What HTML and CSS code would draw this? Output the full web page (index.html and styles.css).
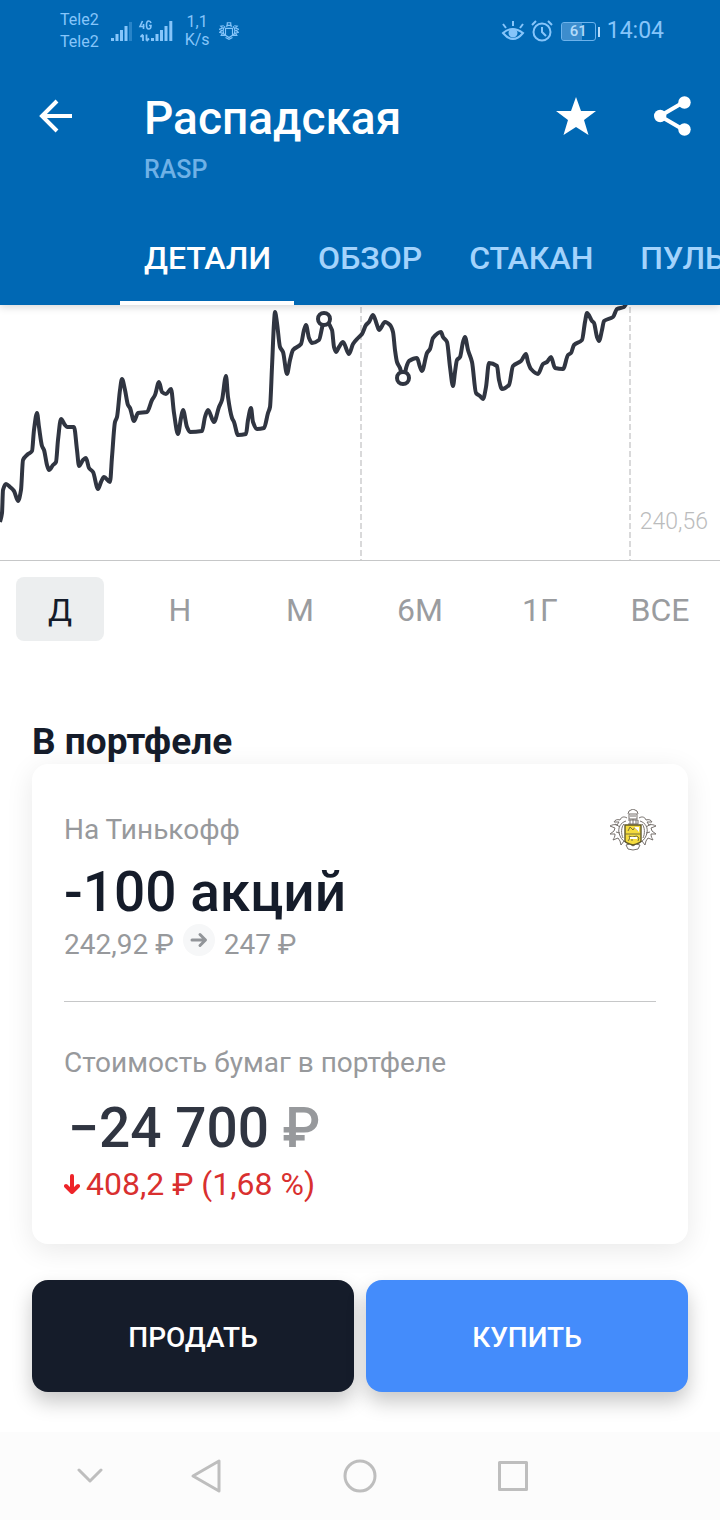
FILE: index.html
```html
<!DOCTYPE html>
<html lang="ru">
<head>
<meta charset="utf-8">
<meta name="viewport" content="width=device-width, initial-scale=1">
<title>Распадская</title>
<link rel="stylesheet" href="styles.css">
</head>
<body>
<div class="screen">
  <header class="header">
    <div class="status">
      <div class="carriers"><span>Tele2</span><span>Tele2</span></div>
      <svg class="signal" width="62" height="24" viewBox="111 18 62 24" aria-hidden="true">
        <path d="M112.500 37v3M117 33v7M121.500 29v11M126 25v15" stroke-width="3" stroke="currentColor"/>
        <path d="M130.500 21v19" stroke-width="3" stroke="currentColor" opacity=".3"/>
        <path d="M142.500 20l-2.500 5.500h4.500M143.500 23v5M151 22q-.5-2-2.300-2-2.200 0-2.200 4t2.200 4q2.300 0 2.300-3.500h-2" fill="none" stroke="currentColor" stroke-width="1.600"/>
        <path d="M143 40v-6M140.500 36l2.500-2.500M146.500 33.500v6M149 37.500l-2.500 2.500" fill="none" stroke="currentColor" stroke-width="1.800"/>
        <path d="M152.500 37v3M157 33v7M161.500 29v11M166 25v15M170.800 20v20" stroke-width="3" stroke="currentColor"/>
      </svg>
      <div class="speed"><span>1,1</span><span>K/s</span></div>
      <svg width="20" height="20" viewBox="0 0 46 42" aria-hidden="true" fill="none" stroke="currentColor" stroke-width="2.600">
        <path d="M15 15h16v16l-8 5-8-5zM18 12V8h10v4M19 7V2h8v5M14 10C8 15 8 25 14 32M32 10c6 5 6 15 0 22M11 9l-7 1 4 4-7 3 6 3-6 4 7 2-3 5 7 0M35 9l7 1-4 4 7 3-6 3 6 4-7 2 3 5-7 0M15 36l8 4 8-4"/>
      </svg>
      <div class="status-right">
        <svg width="24" height="22" viewBox="0 0 24 22" fill="none" stroke="currentColor" stroke-width="2" aria-hidden="true">
          <path d="M2 13q9-8 20 0-10 12-20 0zM12 6V1M5 8L2 4M19 8l3-4"/><circle cx="12" cy="13" r="3.500" fill="currentColor"/>
        </svg>
        <svg width="22" height="22" viewBox="0 0 22 22" fill="none" stroke="currentColor" stroke-width="2" aria-hidden="true">
          <circle cx="11" cy="12" r="8.500"/><path d="M11 7v5l4 4M1 5l4-4M21 5l-4-4"/>
        </svg>
        <span class="battery">61</span>
        <time class="clock">14:04</time>
      </div>
    </div>

    <div class="toolbar">
      <button class="icon-button" aria-label="Назад">
        <svg width="34" height="34" viewBox="0 0 34 34" fill="none" stroke="currentColor" stroke-width="4"><path d="M33 17H4M18 2L3 17l15 15"/></svg>
      </button>
      <h1 class="title">Распадская</h1>
      <button class="icon-button" aria-label="В избранное">
        <svg width="40" height="38" viewBox="0 0 40 38" fill="currentColor"><path d="M20 0l5 14h15L28 23l4.500 15L20 30 7.500 38 12 23 0 14h15z"/></svg>
      </button>
      <button class="icon-button" aria-label="Поделиться">
        <svg width="38" height="40" viewBox="0 0 38 40" fill="currentColor"><path d="M30 6L6 20l24 14" fill="none" stroke="currentColor" stroke-width="4"/><circle cx="30.500" cy="6.500" r="6.200"/><circle cx="6.200" cy="20" r="6.200"/><circle cx="30.500" cy="33.500" r="6.200"/></svg>
      </button>
    </div>
    <p class="ticker">RASP</p>

    <nav class="tabs">
      <a class="tab tab-active" href="#details" aria-current="page">ДЕТАЛИ</a>
      <a class="tab" href="#overview">ОБЗОР</a>
      <a class="tab" href="#book">СТАКАН</a>
      <a class="tab" href="#pulse">ПУЛЬС</a>
    </nav>
  </header>

  <main class="content">
    <section class="chart" id="details" aria-label="График цены">
      <svg class="chart-plot" viewBox="0 305 720 255" aria-hidden="true">
        <path d="M361 307V560M630 307V560" stroke="#d9d9da" stroke-width="2" stroke-dasharray="6 3" fill="none"/>
        <path class="price-line" id="price-line"/>
        <circle class="trade" cx="324" cy="319" r="6"/>
        <circle class="trade" cx="403" cy="378" r="6"/>
      </svg>
      <span class="chart-label">240,56</span>
    </section>

    <div class="periods">
      <button class="period period-active" aria-pressed="true">Д</button>
      <button class="period">Н</button>
      <button class="period">М</button>
      <button class="period">6М</button>
      <button class="period">1Г</button>
      <button class="period">ВСЕ</button>
    </div>

    <h2 class="section-title">В портфеле</h2>
    <section class="card">
      <div class="card-head">
        <p class="caption">На Тинькофф</p>
        <svg width="46" height="42" viewBox="0 0 46 42" fill="none" stroke="#77716d" stroke-width="1" aria-hidden="true">
          <path d="M19 5h8v5h-8zM18 5l1-3 4-2 4 2 1 3M20 7h6M18 11h10v4H18M20 11v4M23 10v5M26 11v4"/>
          <path d="M17 9c-3-2-6-1-7 2-3-1-5 0-6 2l5 0-2 3c-3-1-5 0-7 1l5 2-1 3-4 3 5 0c0 3-1 4-2 6l5-2 2 3 1 4 3-4 4 3M29 9c3-2 6-1 7 2 3-1 5 0 6 2l-5 0 2 3c3-1 5 0 7 1l-5 2 1 3 4 3-5 0c0 3 1 4 2 6l-5-2-2 3-1 4-3-4-4 3"/>
          <path d="M16 12c-6 2-8 7-7 12 1 4 3 7 6 9M30 12c6 2 8 7 7 12-1 4-3 7-6 9M14 15c-3 3-3 10-1 14M32 15c3 3 3 10 1 14M5 15l5 3M41 15l-5 3M6 23l4 1M40 23l-4 1M16 36l4-1 3 2 3-2 4 1-2 4-5 1-5-1z"/>
          <path d="M15 16h16v16q-1 2-8 4-7-2-8-4z" fill="#f5dc3e" stroke="#5f5727" stroke-width="1.400"/>
          <path d="M15 25h16M18 22l2-4 3 3 2-3 3 4M18 32l2-3-1-2 3 1 5-1 2 2-1 3M22 29v3" stroke="#77713f"/>
          <path d="M24 18l5 0v5zM20 28h7v2h-7z" fill="#fff" stroke="none"/>
        </svg>
      </div>
      <p class="amount">-100 акций</p>
      <p class="price-change">
        <span>242,92 ₽</span>
        <svg width="32" height="32" viewBox="0 0 32 32" fill="none" aria-hidden="true"><circle cx="16" cy="16" r="16" fill="#f6f7f8"/><path d="M9 16h13M17 10.500l5.500 5.500-5.500 5.500" stroke="#929599" stroke-width="3" stroke-linecap="round" stroke-linejoin="round"/></svg>
        <span>247 ₽</span>
      </p>
      <hr class="divider">
      <p class="caption">Стоимость бумаг в портфеле</p>
      <p class="amount amount-total">−24 700 <span class="currency">₽</span></p>
      <p class="loss">
        <svg width="16" height="20" viewBox="0 0 16 20" fill="none" stroke="#ee2429" stroke-width="4" stroke-linecap="round" stroke-linejoin="round" aria-hidden="true"><path d="M8 2v15M2 12l6 6 6-6"/></svg>
        <span>408,2 ₽ (1,68 %)</span>
      </p>
    </section>

    <div class="actions">
      <button class="action action-sell">ПРОДАТЬ</button>
      <button class="action action-buy">КУПИТЬ</button>
    </div>
  </main>

  <nav class="system-nav" aria-label="Система">
    <button class="icon-button" aria-label="Скрыть"><svg width="28" height="16" viewBox="0 0 28 16"><path d="M3 2l11 11L25 2"/></svg></button>
    <button class="icon-button" aria-label="Назад"><svg width="32" height="36" viewBox="0 0 32 36"><path d="M29 3v30L3 18z"/></svg></button>
    <button class="icon-button" aria-label="Домой"><svg width="36" height="36" viewBox="0 0 36 36"><circle cx="18" cy="18" r="15"/></svg></button>
    <button class="icon-button" aria-label="Недавние"><svg width="32" height="32" viewBox="0 0 32 32"><rect x="2.500" y="2.500" width="27" height="27"/></svg></button>
  </nav>
</div>
<script src="chart.js"></script>
</body>
</html>
```
FILE: chart.js
```js
const prices = "0,522 2,513 3,490 6,484 10,487 14,491 18,501 21,490 23,460 27,455 32,451 34,430 37,413 39,427 42,446 44,450 47,465 49,470 53,465 56,462 58,440 61,419 65,425 67,427 74,427 77,450 79,466 83,460 86,458 89,468 93,472 98,489 101,482 104,477 110,482 112,457 115,422 117,417 120,390 122,379 125,390 128,405 130,408 134,421 138,413 147,412 152,400 155,395 159,382 162,392 166,394 171,389 174,413 178,434 181,418 183,410 187,427 190,432 202,431 205,417 208,410 214,422 219,407 222,400 226,376 228,397 232,418 234,422 238,435 246,434 248,420 251,408 253,422 257,429 264,428 268,413 270,407 272,367 274,323 275,312 277,323 280,347 283,352 287,374 290,360 293,350 301,344 304,330 306,325 309,338 312,343 319,340 322,328 324,319 332,330 334,347 336,352 339,347 343,342 349,354 353,344 358,338 362,334 366,325 369,322 373,315 377,325 379,330 385,322 390,325 393,332 395,350 397,362 400,368 403,378 407,365 409,361 417,358 420,367 422,371 427,353 430,349 433,338 441,332 443,337 447,342 450,367 453,386 455,372 457,360 460,357 463,342 465,337 468,350 472,362 476,393 480,396 483,399 486,387 489,363 497,366 499,380 502,389 509,385 513,366 521,361 526,354 528,362 531,369 538,374 543,364 547,362 551,357 555,368 563,369 568,355 571,353 574,345 582,340 585,322 587,313 592,321 594,323 597,337 599,341 602,330 604,321 613,317 617,309 624,307 626,304"
  .split(" ")
  .map((pair) => pair.split(",").map(Number));

// Monotone cubic interpolation: flat at every local high and low.
function smoothPath(points) {
  const slopes = points.slice(1).map((p, i) => (p[1] - points[i][1]) / (p[0] - points[i][0]));
  const tangents = points.map((_, i) => {
    const before = slopes[i - 1];
    const after = slopes[i];
    if (before === undefined) return after;
    if (after === undefined) return before;
    return before * after <= 0 ? 0 : (2 * before * after) / (before + after);
  });
  let d = `M${points[0]}`;
  for (let i = 1; i < points.length; i++) {
    const [x0, y0] = points[i - 1];
    const [x1, y1] = points[i];
    const third = (x1 - x0) / 3;
    d += `C${x0 + third},${y0 + tangents[i - 1] * third} ${x1 - third},${y1 - tangents[i] * third} ${x1},${y1}`;
  }
  return d;
}

document.getElementById("price-line").setAttribute("d", smoothPath(prices));
```
FILE: styles.css
```css
* { box-sizing: border-box; }

body {
  margin: 0;
  background: #fff;
  color: #151c2a;
  font-family: Roboto, "Noto Sans", sans-serif;
}

h1, h2, p { margin: 0; font-weight: 400; }

button {
  padding: 0;
  border: 0;
  background: none;
  color: inherit;
  font-family: inherit;
  cursor: pointer;
}

svg { display: block; flex: none; }

.screen {
  display: flex;
  flex-direction: column;
  min-height: 100vh;
  overflow: hidden;
}

.header {
  position: relative;
  z-index: 1;
  background: #0068b4;
  color: #fff;
  box-shadow: 0 2px 8px rgba(0, 0, 0, 0.16);
}

.status {
  display: flex;
  align-items: center;
  height: 62px;
  padding: 0 56px 0 60px;
  color: #86c5fa;
}

.carriers, .speed {
  display: flex;
  flex-direction: column;
  font-size: 16px;
  line-height: 22px;
}

.signal { margin: 0 12px; }

.speed {
  align-items: center;
  margin-right: 9px;
  line-height: 18px;
}

.status-right {
  display: flex;
  align-items: center;
  gap: 8px;
  margin-left: auto;
}

.status-right svg + svg { margin-left: -2px; }

.battery {
  position: relative;
  width: 35px;
  height: 19px;
  margin-right: 3px;
  border: 1px solid #6db3ec;
  border-radius: 3px;
  background: linear-gradient(90deg, #3d8dcd 61%, transparent 61%) padding-box;
  color: #b5dcfb;
  font-size: 15px;
  font-weight: 500;
  line-height: 17px;
  text-align: center;
}

.battery::after {
  content: "";
  position: absolute;
  top: 4px;
  right: -5px;
  width: 2px;
  height: 10px;
  background: currentColor;
}

.clock { font-size: 23px; line-height: 28px; }

.toolbar {
  display: flex;
  align-items: center;
  gap: 58px;
  height: 88px;
  padding: 20px 28px 0 39px;
}

.icon-button {
  display: flex;
  align-items: center;
  justify-content: center;
}

.title {
  flex: 1;
  margin-left: 13px;
  padding-top: 4px;
  font-size: 46px;
  font-weight: 500;
  line-height: 56px;
}

.ticker {
  padding: 6px 0 0 144px;
  color: #6fb1e6;
  font-size: 25px;
  font-weight: 500;
  line-height: 28px;
}

.tabs {
  display: flex;
  margin-top: 30px;
  padding-left: 120px;
  overflow: hidden;
}

.tab {
  flex: none;
  padding: 25px 23px 24px 24px;
  border-bottom: 4px solid transparent;
  color: #a3d3fc;
  font-size: 32px;
  font-weight: 500;
  line-height: 38px;
  text-decoration: none;
}

.tab-active { border-color: #fff; color: #fff; }

.content { flex: 1; }

.chart {
  position: relative;
  border-bottom: 1px solid #c6c7c8;
}

.chart-plot { width: 100%; height: auto; }

.price-line {
  fill: none;
  stroke: #303541;
  stroke-width: 4;
  stroke-linejoin: round;
}

.trade { fill: #fff; stroke: #303541; stroke-width: 4; }

.chart-label {
  position: absolute;
  right: 12px;
  bottom: 24px;
  color: #bbbcbd;
  font-size: 23px;
  font-weight: 300;
  line-height: 28px;
}

.periods {
  display: grid;
  grid-template-columns: repeat(6, 1fr);
  gap: 32px;
  padding: 16px;
}

.period {
  height: 64px;
  padding-top: 2px;
  border-radius: 8px;
  color: #9a9c9f;
  font-size: 32px;
  white-space: nowrap;
}

.period-active { background: #eceeef; color: #151c2a; }

.section-title {
  margin: 63px 32px 0;
  font-size: 37px;
  font-weight: 700;
  line-height: 44px;
}

.card {
  margin: 0 32px;
  padding: 45px 32px 36px;
  border-radius: 16px;
  background: #fff;
  box-shadow: 0 6px 28px rgba(0, 0, 0, 0.09);
}

.card-head {
  display: flex;
  align-items: center;
  justify-content: space-between;
}

.caption { color: #97999c; font-size: 28px; line-height: 36px; }

.amount {
  margin-top: 9px;
  font-size: 55px;
  font-weight: 500;
  line-height: 64px;
}

.price-change {
  display: flex;
  gap: 9px;
  color: #97999c;
  font-size: 28px;
  line-height: 42px;
}

.divider {
  height: 1px;
  margin: 35px 0 43px;
  border: 0;
  background: #c6c7c8;
}

.amount-total { margin-top: 15px; padding-left: 4px; color: #303541; }

.currency { color: #97999c; }

.loss {
  display: flex;
  align-items: center;
  gap: 6px;
  color: #d9302f;
  font-size: 32px;
  line-height: 48px;
}

.actions {
  display: grid;
  grid-template-columns: 1fr 1fr;
  gap: 12px;
  padding: 36px 32px 40px;
}

.action {
  height: 112px;
  padding-top: 2px;
  border-radius: 16px;
  color: #fff;
  font-size: 28px;
  font-weight: 500;
  box-shadow: 0 10px 20px rgba(0, 0, 0, 0.22);
}

.action-sell { background: #151c2a; }
.action-buy { background: #448cfb; }

.system-nav {
  position: relative;
  display: grid;
  grid-template-columns: 116fr 116fr 192fr 112fr;
  height: 88px;
  padding: 0 21% 0 32px;
  background: #fcfcfc;
}

.system-nav svg {
  fill: none;
  stroke: #bebebe;
  stroke-width: 3;
  stroke-linecap: round;
  stroke-linejoin: round;
}
```
